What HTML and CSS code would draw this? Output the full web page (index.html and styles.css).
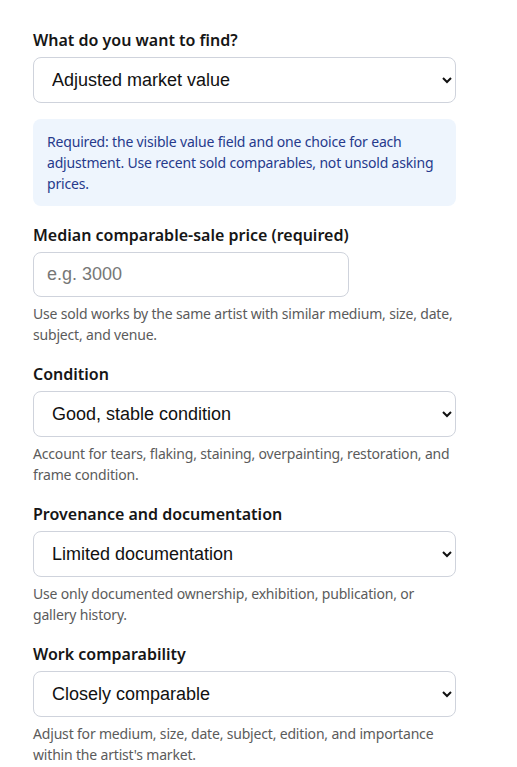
FILE: index.html
```html
<!DOCTYPE html>
<html lang="en">
<head>
    <meta charset="UTF-8">
    <title>Artwork Value Estimator</title>
    <link rel="stylesheet" href="styles.css">
</head>
<body>
    <!-- Estimator form -->
    <form class="estimator">
        <!-- Goal picker -->
        <div class="field">
            <label for="goal" class="field-label">What do you want to find?</label>
            <select id="goal" class="field-control">
                <option>Adjusted market value</option>
                <option>Median comparable-sale price</option>
            </select>
        </div>

        <!-- Requirements note -->
        <div class="notice">
            Required: the visible value field and one choice for each adjustment. Use recent sold comparables, not unsold asking prices.
        </div>

        <!-- Comparable price -->
        <div class="field">
            <label for="median-price" class="field-label">Median comparable-sale price (required)</label>
            <input type="text" id="median-price" class="field-control short" placeholder="e.g. 3000">
            <p class="field-help">Use sold works by the same artist with similar medium, size, date, subject, and venue.</p>
        </div>

        <!-- Condition -->
        <div class="field">
            <label for="condition" class="field-label">Condition</label>
            <select id="condition" class="field-control">
                <option>Good, stable condition</option>
                <option>Excellent condition</option>
                <option>Fair, needs conservation</option>
            </select>
            <p class="field-help">Account for tears, flaking, staining, overpainting, restoration, and frame condition.</p>
        </div>

        <!-- Provenance -->
        <div class="field">
            <label for="provenance" class="field-label">Provenance and documentation</label>
            <select id="provenance" class="field-control">
                <option>Limited documentation</option>
                <option>Strong documentation</option>
                <option>No documentation</option>
            </select>
            <p class="field-help">Use only documented ownership, exhibition, publication, or gallery history.</p>
        </div>

        <!-- Comparability -->
        <div class="field">
            <label for="comparability" class="field-label">Work comparability</label>
            <select id="comparability" class="field-control">
                <option>Closely comparable</option>
                <option>Somewhat comparable</option>
                <option>Loosely comparable</option>
            </select>
            <p class="field-help">Adjust for medium, size, date, subject, edition, and importance within the artist's market.</p>
        </div>
    </form>
</body>
</html>
```

FILE: styles.css
```css
/* Reset */
* {
    box-sizing: border-box;
    margin: 0;
    padding: 0;
}

body {
    font-family: "Noto Sans", "Open Sans", sans-serif;
    color: #1a1a1a;
    background: #fff;
    padding: 29px 33px;
}

/* Form column */
.estimator {
    width: 423px;
    display: flex;
    flex-direction: column;
    gap: 18px;
}

.field {
    display: flex;
    flex-direction: column;
}

/* Field label */
.field-label {
    font-size: 16px;
    font-weight: 600;
    line-height: 22px;
    margin-bottom: 6px;
    color: #161616;
}

/* Select and input boxes */
.field-control {
    width: 100%;
    height: 46px;
    padding: 0 16px 0 14px;
    font-family: "Liberation Sans", Arial, sans-serif;
    font-size: 18px;
    color: #111;
    background-color: #fff;
    border: 1px solid #cfd3dc;
    border-radius: 8px;
    outline: none;
}

.field-control.short {
    width: 316px;
    height: 45px;
    padding-left: 13px;
}

.field-control::placeholder {
    color: #777;
}

/* Help text under a field */
.field-help {
    margin-top: 6px;
    font-size: 14px;
    letter-spacing: -0.18px;
    line-height: 21px;
    color: #5b5b5b;
}

/* Blue notice box */
.notice {
    margin-top: -2px;
    padding: 12px 14px;
    background-color: #eef5fd;
    border-radius: 8px;
    font-size: 14px;
    letter-spacing: -0.18px;
    line-height: 21px;
    color: #263a8c;
}
```
